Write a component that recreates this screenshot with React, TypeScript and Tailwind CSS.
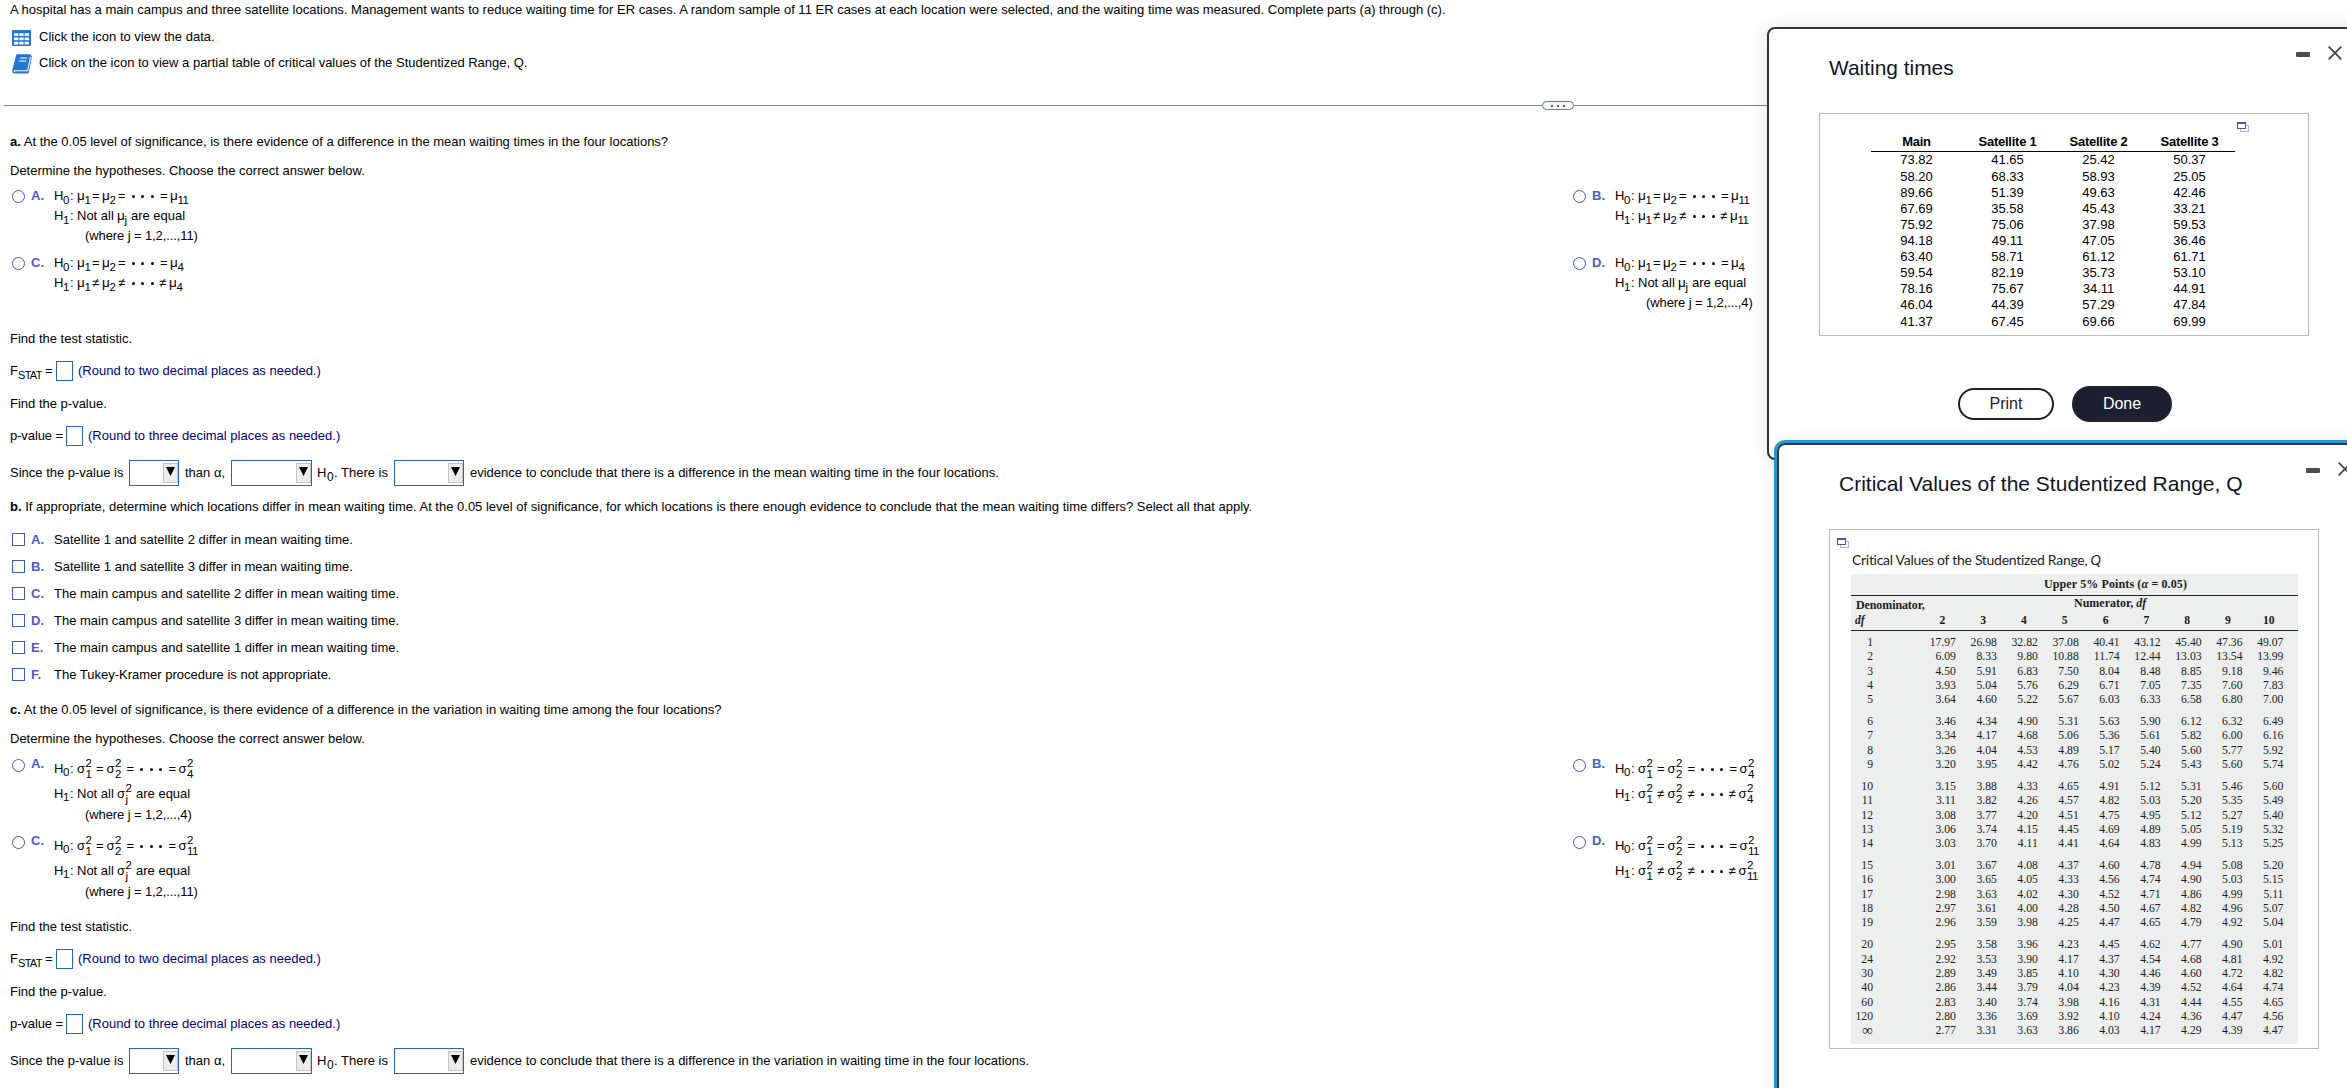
import type { ReactNode } from "react";
import clsx from "clsx";

type Sym = "mu" | "sigma";
type Rel = "=" | "≠";

const waitingTimes = [
  ["73.82", "41.65", "25.42", "50.37"],
  ["58.20", "68.33", "58.93", "25.05"],
  ["89.66", "51.39", "49.63", "42.46"],
  ["67.69", "35.58", "45.43", "33.21"],
  ["75.92", "75.06", "37.98", "59.53"],
  ["94.18", "49.11", "47.05", "36.46"],
  ["63.40", "58.71", "61.12", "61.71"],
  ["59.54", "82.19", "35.73", "53.10"],
  ["78.16", "75.67", "34.11", "44.91"],
  ["46.04", "44.39", "57.29", "47.84"],
  ["41.37", "67.45", "69.66", "69.99"],
];

// Each block is separated by a small gap in the table
const criticalValues = [
  [
    "1 17.97 26.98 32.82 37.08 40.41 43.12 45.40 47.36 49.07",
    "2 6.09 8.33 9.80 10.88 11.74 12.44 13.03 13.54 13.99",
    "3 4.50 5.91 6.83 7.50 8.04 8.48 8.85 9.18 9.46",
    "4 3.93 5.04 5.76 6.29 6.71 7.05 7.35 7.60 7.83",
    "5 3.64 4.60 5.22 5.67 6.03 6.33 6.58 6.80 7.00",
  ],
  [
    "6 3.46 4.34 4.90 5.31 5.63 5.90 6.12 6.32 6.49",
    "7 3.34 4.17 4.68 5.06 5.36 5.61 5.82 6.00 6.16",
    "8 3.26 4.04 4.53 4.89 5.17 5.40 5.60 5.77 5.92",
    "9 3.20 3.95 4.42 4.76 5.02 5.24 5.43 5.60 5.74",
  ],
  [
    "10 3.15 3.88 4.33 4.65 4.91 5.12 5.31 5.46 5.60",
    "11 3.11 3.82 4.26 4.57 4.82 5.03 5.20 5.35 5.49",
    "12 3.08 3.77 4.20 4.51 4.75 4.95 5.12 5.27 5.40",
    "13 3.06 3.74 4.15 4.45 4.69 4.89 5.05 5.19 5.32",
    "14 3.03 3.70 4.11 4.41 4.64 4.83 4.99 5.13 5.25",
  ],
  [
    "15 3.01 3.67 4.08 4.37 4.60 4.78 4.94 5.08 5.20",
    "16 3.00 3.65 4.05 4.33 4.56 4.74 4.90 5.03 5.15",
    "17 2.98 3.63 4.02 4.30 4.52 4.71 4.86 4.99 5.11",
    "18 2.97 3.61 4.00 4.28 4.50 4.67 4.82 4.96 5.07",
    "19 2.96 3.59 3.98 4.25 4.47 4.65 4.79 4.92 5.04",
  ],
  [
    "20 2.95 3.58 3.96 4.23 4.45 4.62 4.77 4.90 5.01",
    "24 2.92 3.53 3.90 4.17 4.37 4.54 4.68 4.81 4.92",
    "30 2.89 3.49 3.85 4.10 4.30 4.46 4.60 4.72 4.82",
    "40 2.86 3.44 3.79 4.04 4.23 4.39 4.52 4.64 4.74",
    "60 2.83 3.40 3.74 3.98 4.16 4.31 4.44 4.55 4.65",
    "120 2.80 3.36 3.69 3.92 4.10 4.24 4.36 4.47 4.56",
    "∞ 2.77 3.31 3.63 3.86 4.03 4.17 4.29 4.39 4.47",
  ],
];

const locationOptions = [
  ["A.", "Satellite 1 and satellite 2 differ in mean waiting time."],
  ["B.", "Satellite 1 and satellite 3 differ in mean waiting time."],
  ["C.", "The main campus and satellite 2 differ in mean waiting time."],
  ["D.", "The main campus and satellite 3 differ in mean waiting time."],
  ["E.", "The main campus and satellite 1 differ in mean waiting time."],
  ["F.", "The Tukey-Kramer procedure is not appropriate."],
];

function TableIcon() {
  return (
    <svg className="mt-[2px] block h-4 w-[19px]" viewBox="0 0 19 16">
      <rect width="19" height="16" rx="1" fill="#2376d8" />
      {[3.2, 7.5, 11.8].map((y) =>
        [2, 7.3, 12.6].map((x) => (
          <rect key={`${x}-${y}`} x={x} y={y} width="4.3" height="2.7" fill="#fff" />
        ))
      )}
    </svg>
  );
}

function BookIcon() {
  return (
    <svg className="mt-[2px] block h-[20px] w-[21px]" viewBox="0 0 21 20">
      <path d="M5.5 0.3H18.3L20 2.6L16.8 18.6Q16.6 19.6 15.6 19.6H2.2Q0 19 0.2 16.4L4 1.4Q4.4 0.3 5.5 0.3Z" fill="#2376d8" />
      <path d="M18.6 2.6L15.6 16.8H2.6Q1.8 17.4 2.8 18" fill="none" stroke="#fff" strokeWidth="1.1" />
      <path d="M8 4H15.2M7.3 7H14.5" stroke="#fff" strokeWidth="1.2" />
    </svg>
  );
}

function PopoutIcon() {
  return (
    <svg className="block h-[11px] w-3" viewBox="0 0 12 11">
      <rect x="3.5" y="3.5" width="8" height="6" fill="#fff" stroke="#b0b4dc" />
      <rect x="0.5" y="0.5" width="8" height="6" fill="#fff" stroke="#4858a8" />
      <path d="M0 1H9" stroke="#4858a8" strokeWidth="2" />
    </svg>
  );
}

function WindowButtons() {
  return (
    <div className="flex items-center gap-[18px]">
      <span className="mt-[3px] h-[5px] w-[14px] rounded-[1px] bg-[#4d4d4d]" />
      <svg className="block size-[14px]" viewBox="0 0 14 14">
        <path d="M0.7 0.7L13.3 13.3M13.3 0.7L0.7 13.3" stroke="#40485a" strokeWidth="1.9" />
      </svg>
    </div>
  );
}

function Line({ className = "h-5", children }: { className?: string; children: ReactNode }) {
  return <div className={clsx("flex items-center whitespace-pre", className)}>{children}</div>;
}

function Hyp({ n }: { n: string }) {
  return (
    <span className="flex w-[23px] shrink-0">
      <span className="w-[9px]">H</span>
      <span className="relative top-[3.5px] w-[7px] text-[11.5px]">{n}</span>:
    </span>
  );
}

function Param({ sym, sub }: { sym: Sym; sub: string }) {
  if (sym === "mu") {
    return (
      <span className="flex">
        <span className="w-[7.5px] text-[13.5px]">μ</span>
        <span className="relative top-[3.5px] text-[11.5px] tracking-[-0.6px]">{sub}</span>
      </span>
    );
  }
  return (
    <span className="flex">
      <span className="w-[8.5px]">σ</span>
      <span className="relative w-[7px] text-[11.5px]">
        <span className="absolute -top-[6px] left-0">2</span>
        <span className="relative top-[5px] tracking-[-0.6px]">{sub}</span>
      </span>
    </span>
  );
}

// H0 / H1 statement that chains the parameters with = or ≠
function Chain({ n, sym, rel, last }: { n: string; sym: Sym; rel: Rel; last: string }) {
  const mu = sym === "mu";
  return (
    <Line className={mu ? "h-5" : "h-[25px]"}>
      <Hyp n={n} />
      <span className={mu ? "w-[15px]" : "w-[19px]"}><Param sym={sym} sub="1" /></span>
      <span className={mu ? "w-[10px]" : "w-[10.5px]"}>{rel}</span>
      <span className={mu ? "w-4" : "w-5"}><Param sym={sym} sub="2" /></span>
      <span className="w-[10.5px]">{rel}</span>
      <span className={clsx("flex", rel === "=" ? "w-[31.5px]" : "w-[30.5px]")}>
        {[0, 1, 2].map((i) => (
          <span key={i} className="mt-px flex w-[9.5px] justify-center">
            <span className="size-[3px] rounded-full bg-black" />
          </span>
        ))}
      </span>
      <span className="w-[10px]">{rel}</span>
      <Param sym={sym} sub={last} />
    </Line>
  );
}

function NotAll({ sym, where }: { sym: Sym; where: string }) {
  const mu = sym === "mu";
  return (
    <>
      <Line className={mu ? "h-5" : "h-[25px]"}>
        <Hyp n="1" />
        <span className="w-[40px]">Not all</span>
        <Param sym={sym} sub="j" />
        <span className={mu ? "ml-[4.5px]" : "ml-[3.5px]"}>are equal</span>
      </Line>
      <Line className={clsx("pl-[31px] tracking-[-0.1px]", mu ? "h-5" : "h-[18px]")}>{`(where j = 1,2,...,${where})`}</Line>
    </>
  );
}

function Choice({ letter, raised, children }: { letter: string; raised?: boolean; children: ReactNode }) {
  return (
    <div className="flex">
      <div className={clsx("flex h-5 w-[42px] items-center", raised && "-mt-[2px]")}>
        <span className="mt-px size-[13px] rounded-full border border-[#3b5bd0]" />
        <span className={clsx("ml-[6px] font-bold text-[#4a5cc8]", raised && "-mt-[3px]")}>{letter}</span>
      </div>
      <div className={clsx(raised && "-mt-px")}>{children}</div>
    </div>
  );
}

function Blank() {
  return <span className="h-5 w-[17px] border border-[#2a62cc] bg-white" />;
}

function Select({ className }: { className: string }) {
  return (
    <span className={clsx("flex h-[26px] justify-end border border-[#2a62cc] bg-white pt-[2px]", className)}>
      <span className="flex h-5 w-[15px] justify-center border border-[#c4c4c4] bg-[#ececec] pt-[3px]">
        <svg className="block size-[9px]" viewBox="0 0 9 9">
          <path d="M0 0H9L4.5 9Z" fill="#000" />
        </svg>
      </span>
    </span>
  );
}

function Statistic({ closing }: { closing: string }) {
  return (
    <>
      <Line>Find the test statistic.</Line>
      <Line className="mt-[12px] h-5">
        <span className="w-2">F</span>
        <span className="relative top-[4px] w-[27px] text-[11px] tracking-[-0.7px]">STAT</span>
        <span className="w-[11px]">=</span>
        <Blank />
        <span className="ml-[5px] text-[#000080]">(Round to two decimal places as needed.)</span>
      </Line>
      <Line className="mt-[13px] h-5">Find the p-value.</Line>
      <Line className="mt-[12px] h-5">
        <span className="w-[56px] tracking-[-0.1px]">p-value =</span>
        <Blank />
        <span className="ml-[5px] text-[#000080]">(Round to three decimal places as needed.)</span>
      </Line>
      <Line className="mt-[14px] h-[26px]">
        <span className="w-[119px]">Since the p-value is</span>
        <Select className="w-[50px]" />
        <span className="ml-[6px] w-[46px]">than α,</span>
        <Select className="w-[81px]" />
        <span className="ml-[5px] flex w-[77px]">
          <span className="w-[10px]">H</span>
          <span className="relative top-[4px] w-[7px] text-[12px]">0</span>. There is
        </span>
        <Select className="w-[70px]" />
        <span className="ml-[6px]">{closing}</span>
      </Line>
    </>
  );
}

function WaitingTimesDialog() {
  return (
    <section className="absolute left-[1767px] top-[27px] h-[433px] w-[620px] rounded-lg border-2 border-[#333] bg-white shadow-[0_0_18px_rgba(0,0,0,0.12)]">
      <div className="flex h-[84px] pl-[60px] pr-[43px] pt-[17px]">
        <h2 className="mt-[8px] flex-1 text-[20.9px] leading-[28px] text-[#0f1528]">Waiting times</h2>
        <div className="h-[14px]"><WindowButtons /></div>
      </div>
      <div className="relative ml-[50px] h-[223px] w-[490px] border border-[#b9b9b9] pl-[51px] pt-[19px]">
        <div className="absolute left-[417px] top-2"><PopoutIcon /></div>
        <table className="w-[364px] table-fixed border-collapse text-center text-[13px]">
          <thead>
            <tr className="h-[18px] border-b border-black">
              {["Main", "Satellite 1", "Satellite 2", "Satellite 3"].map((h) => (
                <th key={h} className="p-0 pt-px font-bold leading-4 tracking-[-0.25px]">{h}</th>
              ))}
            </tr>
          </thead>
          <tbody>
            {waitingTimes.map((row) => (
              <tr key={row[0]} className="group">
                {row.map((v) => (
                  <td key={v} className="p-0 leading-4 group-first:pb-px group-last:pt-px">{v}</td>
                ))}
              </tr>
            ))}
          </tbody>
        </table>
      </div>
      <div className="mt-[50px] flex items-center gap-[18px] pl-[189px] text-base text-[#1c2130]">
        <button className="h-8 w-24 rounded-full border-2 border-[#1c2130] bg-white leading-none">Print</button>
        <button className="h-9 w-[100px] rounded-full bg-[#1c2130] leading-none text-white">Done</button>
      </div>
    </section>
  );
}

function CriticalValuesDialog() {
  return (
    <section className="absolute left-[1777px] top-[443px] h-[700px] w-[620px] rounded-lg border-2 border-[#333] bg-white outline-[3px] outline-[#1f97d4] shadow-[0_0_18px_rgba(0,0,0,0.12)]">
      <div className="flex h-[84px] pl-[60px] pr-[43px] pt-[17px]">
        <h2 className="mt-[8px] flex-1 text-[21px] leading-[28px] text-[#0f1528]">
          Critical Values of the Studentized Range, Q
        </h2>
        <div className="h-[14px]"><WindowButtons /></div>
      </div>
      <div className="ml-[50px] h-[520px] w-[490px] border border-[#b9b9b9] pl-[7px] pt-2">
        <PopoutIcon />
        <p className="ml-[15px] mt-px h-6 font-['Lato'] text-[14px] leading-[20px] tracking-[-0.29px] text-[#222]">
          Critical Values of the Studentized Range, <i>Q</i>
        </p>
        <div className="ml-[14px] h-[470px] w-[447px] bg-[#edefee] font-['Liberation_Serif'] text-[11.7px] text-[#1c1c1c]">
          <div className="h-[22px] border-b border-[#222] pl-[193px] text-[12px] font-bold leading-[20px] tracking-[0.12px]">
            Upper 5% Points (<i>α</i> = 0.05)
          </div>
          <div className="h-[35px] border-b border-[#222] font-bold">
            <div className="flex h-4 text-[12px] leading-4">
              <span className="w-[223px] pl-[5px] pt-px tracking-[-0.1px]">Denominator,</span>
              <span className="-mt-px">Numerator, <i>df</i></span>
            </div>
            <div className="flex pl-1 leading-[17px]">
              <i className="w-[67px]">df</i>
              {[2, 3, 4, 5, 6, 7, 8, 9, 10].map((n) => (
                <span key={n} className="w-[40.8px] text-center">{n}</span>
              ))}
            </div>
          </div>
          <div className="pt-[5px]">
            {criticalValues.map((block, i) => (
              <div key={i} className="mb-[7.5px]">
                {block.map((row) => {
                  const [df, ...values] = row.split(" ");
                  return (
                    <div key={df} className="flex h-[14.33px] text-right leading-[14.33px]">
                      <span className={clsx("mr-[42px] w-[22px]", df === "∞" && "-mt-px text-[15px]")}>{df}</span>
                      {values.map((v, j) => (
                        <span key={j} className="w-[40.95px]">{v}</span>
                      ))}
                    </div>
                  );
                })}
              </div>
            ))}
          </div>
        </div>
      </div>
    </section>
  );
}

export default function App() {
  return (
    <div className="relative h-[1088px] w-[2347px] overflow-hidden bg-white font-['Liberation_Sans',Arial,sans-serif] text-[13px] leading-5 text-black">
      <main className="pl-[10px]">
        <Line>
          A hospital has a main campus and three satellite locations. Management wants to reduce waiting time for ER cases. A random sample of 11 ER cases at each location were selected, and the waiting time was measured. Complete parts (a) through (c).
        </Line>
        <Line className="mt-[7px] h-5 pl-[2px]">
          <TableIcon />
          <span className="ml-2">Click the icon to view the data.</span>
        </Line>
        <Line className="mt-[6px] h-5 pl-[2px]">
          <BookIcon />
          <span className="ml-[6px]">Click on the icon to view a partial table of critical values of the Studentized Range, Q.</span>
        </Line>

        {/* Divider with the drag handle */}
        <div className="-ml-[6px] mt-[27px] flex h-[11px] items-center">
          <span className="h-px w-[1538px] bg-[#7c8b98]" />
          <span className="flex h-[9px] w-8 items-center justify-center gap-1 rounded-full border border-[#6d7c8a] bg-[#f4f6f7]">
            <i className="size-[2px] bg-[#55606c]" />
            <i className="size-[2px] bg-[#55606c]" />
            <i className="size-[2px] bg-[#55606c]" />
          </span>
          <span className="h-px flex-1 bg-[#7c8b98]" />
        </div>

        <Line className="mt-[21px] h-5"><b>a.</b> At the 0.05 level of significance, is there evidence of a difference in the mean waiting times in the four locations?</Line>
        <Line className="mt-[9px] h-5">Determine the hypotheses. Choose the correct answer below.</Line>
        <div className="mt-[5px] grid grid-cols-[1561px_1fr] gap-y-[7px] pl-[2px]">
          <Choice letter="A.">
            <Chain n="0" sym="mu" rel="=" last="11" />
            <NotAll sym="mu" where="11" />
          </Choice>
          <Choice letter="B.">
            <Chain n="0" sym="mu" rel="=" last="11" />
            <Chain n="1" sym="mu" rel="≠" last="11" />
          </Choice>
          <Choice letter="C.">
            <Chain n="0" sym="mu" rel="=" last="4" />
            <Chain n="1" sym="mu" rel="≠" last="4" />
          </Choice>
          <Choice letter="D.">
            <Chain n="0" sym="mu" rel="=" last="4" />
            <NotAll sym="mu" where="4" />
          </Choice>
        </div>

        <div className="mt-4">
          <Statistic closing="evidence to conclude that there is a difference in the mean waiting time in the four locations." />
        </div>

        <Line className="mt-[11px] h-5"><b>b.</b> If appropriate, determine which locations differ in mean waiting time. At the 0.05 level of significance, for which locations is there enough evidence to conclude that the mean waiting time differs? Select all that apply.</Line>
        <div className="mt-[13px] flex flex-col gap-[7px] pl-[2px]">
          {locationOptions.map(([letter, text]) => (
            <Line key={letter}>
              <span className="mb-px size-[13px] border border-[#3b5bd0]" />
              <span className="ml-[6px] w-[23px] font-bold text-[#4a5cc8]">{letter}</span>
              <span>{text}</span>
            </Line>
          ))}
        </div>

        <Line className="mt-[15px] h-5"><b>c.</b> At the 0.05 level of significance, is there evidence of a difference in the variation in waiting time among the four locations?</Line>
        <Line className="mt-[9px] h-5">Determine the hypotheses. Choose the correct answer below.</Line>
        <div className="mt-[8px] grid grid-cols-[1561px_1fr] gap-y-[10px] pl-[2px]">
          <Choice letter="A." raised>
            <Chain n="0" sym="sigma" rel="=" last="4" />
            <NotAll sym="sigma" where="4" />
          </Choice>
          <Choice letter="B." raised>
            <Chain n="0" sym="sigma" rel="=" last="4" />
            <Chain n="1" sym="sigma" rel="≠" last="4" />
          </Choice>
          <Choice letter="C." raised>
            <Chain n="0" sym="sigma" rel="=" last="11" />
            <NotAll sym="sigma" where="11" />
          </Choice>
          <Choice letter="D." raised>
            <Chain n="0" sym="sigma" rel="=" last="11" />
            <Chain n="1" sym="sigma" rel="≠" last="11" />
          </Choice>
        </div>

        <div className="mt-4">
          <Statistic closing="evidence to conclude that there is a difference in the variation in waiting time in the four locations." />
        </div>
      </main>

      <WaitingTimesDialog />
      <CriticalValuesDialog />
    </div>
  );
}
